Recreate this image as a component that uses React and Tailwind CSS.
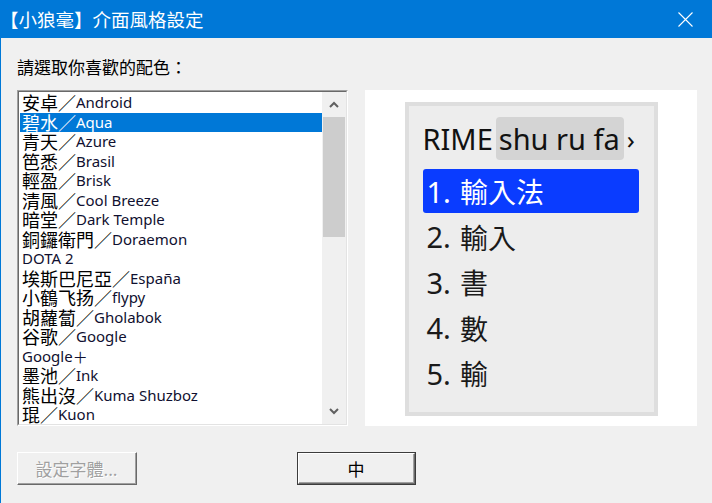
import React from "react";

const items = [
  ["安卓／", "Android"],
  ["碧水／", "Aqua"],
  ["青天／", "Azure"],
  ["笆悉／", "Brasil"],
  ["輕盈／", "Brisk"],
  ["清風／", "Cool Breeze"],
  ["暗堂／", "Dark Temple"],
  ["銅鑼衛門／", "Doraemon"],
  ["", "DOTA 2"],
  ["埃斯巴尼亞／", "España"],
  ["小鶴飞扬／", "flypy"],
  ["胡蘿蔔／", "Gholabok"],
  ["谷歌／", "Google"],
  ["", "Google", "＋"],
  ["墨池／", "Ink"],
  ["熊出沒／", "Kuma Shuzboz"],
  ["琨／", "Kuon"],
];

const cjk = { fontFamily: '"Noto Sans CJK TC", sans-serif' };
const lat = { fontFamily: '"Noto Sans", "Noto Sans CJK TC", sans-serif' };

function Chevron({ up }) {
  return (
    <svg width="10" height="7" viewBox="0 0 10 7">
      <path
        d={up ? "M1 6 L5 2 L9 6" : "M1 1 L5 5 L9 1"}
        fill="none"
        stroke="#606060"
        strokeWidth="2"
      />
    </svg>
  );
}

function ListBox() {
  return (
    <div className="w-[331px] h-[336px] border-t border-l border-t-[#a0a0a0] border-l-[#a0a0a0] border-b border-r border-b-white border-r-white">
      <div className="w-full h-full border-t border-l border-t-[#696969] border-l-[#696969] border-b border-r border-b-[#e3e3e3] border-r-[#e3e3e3] bg-white flex">
        <div className="flex-1 overflow-hidden pt-[1.25px] pl-[1px]">
          {items.map((it, i) => {
            const sel = i === 1;
            return (
              <div
                key={i}
                className={
                  "h-[19.5px] leading-[19.5px] whitespace-nowrap pl-[2px] flex items-center " +
                  (sel ? "bg-[#0078d7] text-white" : "text-black")
                }
              >
                {it[0] && (
                  <span className="text-[18px] leading-[19.5px]" style={cjk}>
                    {it[0]}
                  </span>
                )}
                <span
                  className={"text-[15px] leading-[19.5px] " + (sel ? "text-white" : "text-[#101030]")}
                  style={lat}
                >
                  {it[1]}
                </span>
                {it[2] && (
                  <span className="text-[15px] leading-[19.5px] text-[#101030]" style={cjk}>
                    {it[2]}
                  </span>
                )}
              </div>
            );
          })}
        </div>
        <div className="w-[24px] bg-[#f0f0f0] flex flex-col">
          <div className="h-[25px] flex items-center justify-center">
            <Chevron up />
          </div>
          <div className="mx-[1px] h-[120px] bg-[#cdcdcd]" />
          <div className="flex-1" />
          <div className="h-[25px] flex items-center justify-center">
            <Chevron />
          </div>
        </div>
      </div>
    </div>
  );
}

function Preview() {
  return (
    <div className="w-[332px] h-[336px] bg-white flex justify-center pt-[12px]">
      <div className="w-[253px] h-[314px] border-[4px] border-[#dedede] bg-[#ededed] pl-[14px] pr-[10px] pt-[11px]" style={lat}>
        <div className="flex items-center h-[43px] text-[#111] text-[29px] leading-none whitespace-nowrap">
          <span className="shrink-0">RIME</span>
          <span className="shrink-0 ml-[3px] h-[43px] rounded-[4px] bg-[#d4d4d4] pl-[3px] pr-[4px] flex items-center">
            shu ru fa
          </span>
          <span className="shrink-0 ml-[3px] text-[26px]">›</span>
        </div>
        <div className="mt-[9px] flex flex-col gap-[1.5px]">
          {[
            ["1.", "輸入法"],
            ["2.", "輸入"],
            ["3.", "書"],
            ["4.", "數"],
            ["5.", "輸"],
          ].map(([n, c], i) => (
            <div
              key={i}
              className={
                "h-[44px] w-[216px] rounded-[3px] flex items-center pl-[4px] leading-none whitespace-nowrap " +
                (i === 0 ? "bg-[#0a3cff] text-white" : "text-[#1a1a1a]")
              }
            >
              <span className="text-[29px]" style={lat}>{n}</span>
              <span className="ml-[9px] text-[28px]" style={cjk}>
                {c}
              </span>
            </div>
          ))}
        </div>
      </div>
    </div>
  );
}

function Button({ children, disabled, isDefault }) {
  return (
    <div
      className={
        "h-[33px] " +
        (isDefault ? "w-[119px] border border-[#3c3c3c]" : "w-[120px]")
      }
    >
      <div className="w-full h-full border-t border-l border-t-white border-l-white border-b border-r border-b-[#696969] border-r-[#696969]">
        <div className="w-full h-full border-b border-r border-b-[#a0a0a0] border-r-[#a0a0a0] bg-[#f0f0f0] flex items-center justify-center">
          <span
            className={"text-[17px] leading-none whitespace-nowrap " + (disabled ? "text-[#a0a0a0]" : "text-black")}
            style={{
              ...cjk,
              textShadow: disabled ? "1px 1px 0 #ffffff" : "none",
            }}
          >
            {children}
          </span>
        </div>
      </div>
    </div>
  );
}

export default function App() {
  return (
    <div className="w-[712px] h-[503px] bg-[#f0f0f0] flex flex-col overflow-hidden">
      <div className="h-[38px] bg-[#0078d7] flex items-center justify-between pl-0 pr-[19px] text-white">
        <span className="text-[18.5px] leading-none" style={cjk}>
          【小狼毫】介面風格設定
        </span>
        <svg width="15" height="15" viewBox="0 0 15 15">
          <path d="M0.5 0.5 L14.5 14.5 M14.5 0.5 L0.5 14.5" stroke="white" strokeWidth="1.1" />
        </svg>
      </div>
      <div className="flex-1 border-l border-[#0078d7] flex flex-col pl-[16px]">
        <div className="mt-[18px] h-[20px] flex items-center text-[17px] text-black leading-none" style={cjk}>
          請選取你喜歡的配色：
        </div>
        <div className="mt-[14px] flex gap-[17px]">
          <ListBox />
          <Preview />
        </div>
        <div className="mt-[26px] flex">
          <Button disabled>設定字體...</Button>
          <div className="ml-[160px]">
            <Button isDefault>中</Button>
          </div>
        </div>
      </div>
    </div>
  );
}
